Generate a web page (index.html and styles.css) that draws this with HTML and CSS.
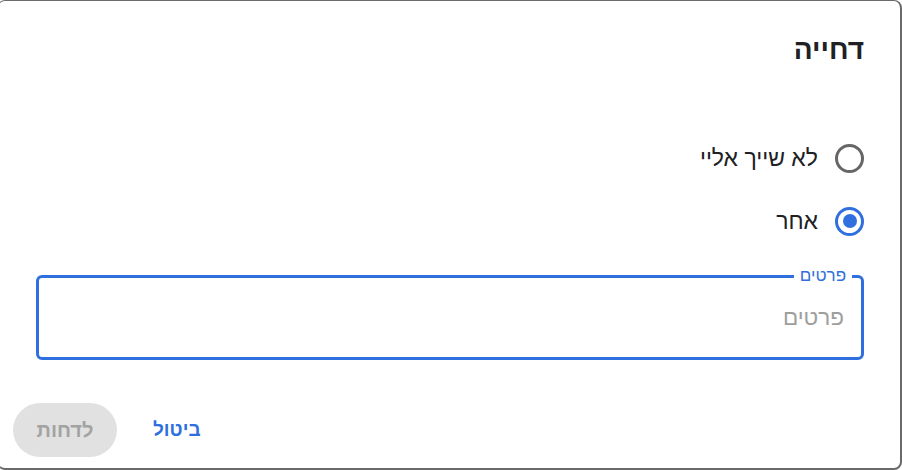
FILE: index.html
```html
<!DOCTYPE html>
<html lang="he" dir="rtl">
<head>
<meta charset="utf-8">
<link rel="stylesheet" href="styles.css">
</head>
<body>
<div class="dialog">
  <h2 class="title">דחייה</h2>
  <div class="options">
    <label class="option">
      <span class="radio"></span>
      <span class="option-text">לא שייך אליי</span>
    </label>
    <label class="option">
      <span class="radio checked"></span>
      <span class="option-text">אחר</span>
    </label>
  </div>
  <div class="field">
    <span class="field-label">פרטים</span>
    <span class="placeholder">פרטים</span>
  </div>
  <div class="actions">
    <button class="btn-text">ביטול</button>
    <button class="btn-disabled">לדחות</button>
  </div>
</div>
</body>
</html>
```
FILE: styles.css
```css
html, body {
  margin: 0;
  padding: 0;
  overflow: hidden;
  background: #ffffff;
}
body {
  font-family: "Liberation Sans", Arial, "DejaVu Sans", sans-serif;
}
.dialog {
  direction: rtl;
  box-sizing: border-box;
  width: 905px;
  height: 470px;
  margin-left: -4px;
  border: 1px solid #6a6a6a;
  border-right-width: 2px;
  border-bottom-width: 2px;
  border-radius: 8px;
  padding: 31px 36px 0 38px;
  display: flex;
  flex-direction: column;
}
.title {
  margin: 0;
  font-size: 28px;
  font-weight: bold;
  color: #202124;
  line-height: 36px;
}
.options {
  margin-top: 76px;
  display: flex;
  flex-direction: column;
  gap: 35px;
}
.option {
  display: flex;
  align-items: center;
  gap: 17px;
  height: 28px;
}
.radio {
  box-sizing: border-box;
  width: 29px;
  height: 29px;
  border: 3px solid #666666;
  border-radius: 50%;
  display: flex;
  align-items: center;
  justify-content: center;
  flex: none;
}
.radio.checked {
  border-color: #2f6fde;
}
.radio.checked::after {
  content: "";
  width: 14px;
  height: 14px;
  border-radius: 50%;
  background: #2f6fde;
}
.option-text {
  font-size: 23px;
  color: #202124;
}
.field {
  position: relative;
  margin-top: 40px;
  box-sizing: border-box;
  height: 85px;
  border: 3px solid #2f6fde;
  border-radius: 6px;
  display: flex;
  align-items: center;
  padding-right: 17px;
}
.field-label {
  position: absolute;
  top: -12px;
  right: 9px;
  padding: 0 6px;
  background: #ffffff;
  color: #2f6fde;
  font-size: 17px;
  line-height: 20px;
}
.placeholder {
  font-size: 22.5px;
  color: #9e9e9e;
}
.actions {
  margin-top: 43px;
  margin-left: -23px;
  display: flex;
  flex-direction: row;
  justify-content: flex-end;
  align-items: center;
  gap: 24px;
}
.btn-text {
  border: none;
  background: none;
  font-family: inherit;
  font-size: 19px;
  font-weight: bold;
  color: #2f6fde;
  padding: 0 12px;
  height: 54px;
}
.btn-disabled {
  border: none;
  font-family: inherit;
  font-size: 20px;
  font-weight: bold;
  color: #a3a3a3;
  background: #e1e1e1;
  border-radius: 27px;
  width: 104px;
  height: 54px;
}
```
